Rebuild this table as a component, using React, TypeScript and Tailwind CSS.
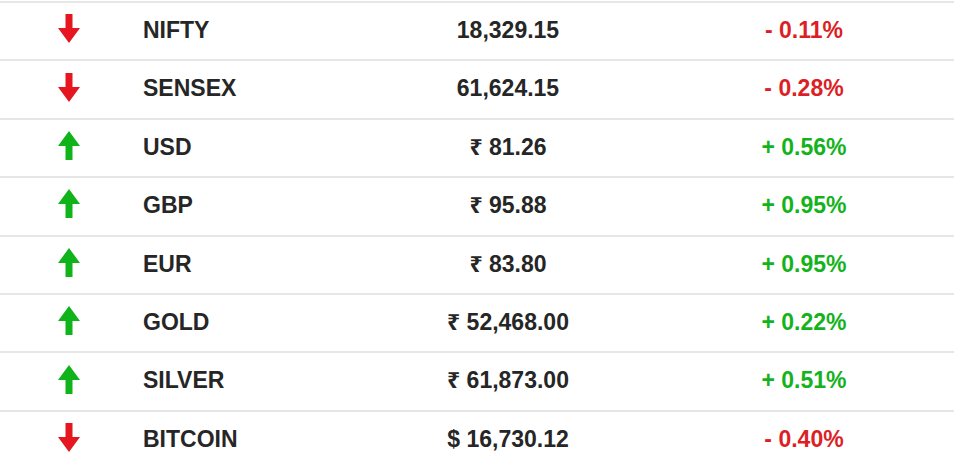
type Quote = {
  name: string;
  value: string;
  change: string;
  up: boolean;
};

const quotes: Quote[] = [
  { name: "NIFTY", value: "18,329.15", change: "- 0.11%", up: false },
  { name: "SENSEX", value: "61,624.15", change: "- 0.28%", up: false },
  { name: "USD", value: "₹ 81.26", change: "+ 0.56%", up: true },
  { name: "GBP", value: "₹ 95.88", change: "+ 0.95%", up: true },
  { name: "EUR", value: "₹ 83.80", change: "+ 0.95%", up: true },
  { name: "GOLD", value: "₹ 52,468.00", change: "+ 0.22%", up: true },
  { name: "SILVER", value: "₹ 61,873.00", change: "+ 0.51%", up: true },
  { name: "BITCOIN", value: "$ 16,730.12", change: "- 0.40%", up: false },
];

const Arrow = ({ up }: { up: boolean }) => {
  // same shape, flipped for the up arrow
  return (
    <svg
      width="22"
      height="29"
      viewBox="0 0 22 29"
      className={up ? "rotate-180" : ""}
    >
      <path
        d="M7.5 0 H14.5 V14 H22 L11 29 L0 14 H7.5 Z"
        fill={up ? "#10b31a" : "#e5161f"}
      />
    </svg>
  );
};

const App = () => {
  return (
    <div className="w-[955px] h-[473px] bg-white overflow-hidden font-['Liberation_Sans','Noto_Sans',Arial,sans-serif]">
      <div className="w-[954px] mt-px">
        {quotes.map((q) => (
          <div
            key={q.name}
            className="grid grid-cols-[138px_224px_292px_1fr] items-center h-[58.4px] pb-[2px] border-t-2 border-[#e6e6e6] text-[23px] font-bold text-[#262626]"
          >
            {/* trend arrow */}
            <div className="flex justify-center -mt-[3px]">
              <Arrow up={q.up} />
            </div>

            <div className="pl-[5px]">{q.name}</div>

            <div className="text-center">{q.value}</div>

            <div
              className={
                q.up
                  ? "text-center text-[#14b31c]"
                  : "text-center text-[#dc1f26]"
              }
            >
              {q.change}
            </div>
          </div>
        ))}
      </div>
    </div>
  );
};

export default App;
